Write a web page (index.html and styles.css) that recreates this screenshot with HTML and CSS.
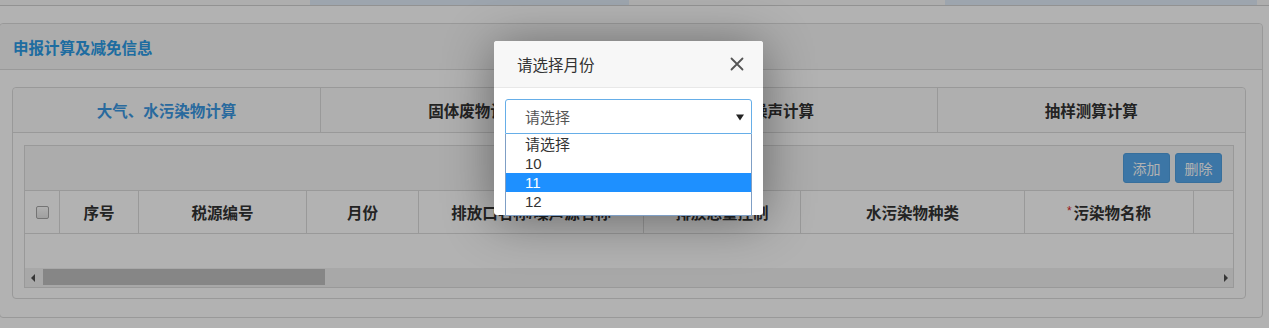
FILE: index.html
```html
<!DOCTYPE html>
<html lang="zh-CN">
<head>
<meta charset="utf-8">
<title>申报计算及减免信息</title>
<link rel="stylesheet" href="styles.css">
</head>
<body>
<div class="page">
  <div class="topstrip">
    <div class="ts ts-1"></div>
    <div class="ts ts-2"></div>
    <div class="ts ts-3"></div>
    <div class="ts ts-4"></div>
    <div class="ts ts-5"></div>
  </div>
  <div class="panel">
    <div class="panel-head"><span class="panel-title">申报计算及减免信息</span></div>
    <div class="panel-body">
      <div class="tabs">
        <div class="tab-nav">
          <div class="tab active">大气、水污染物计算</div>
          <div class="tab">固体废物计算</div>
          <div class="tab">噪声计算</div>
          <div class="tab">抽样测算计算</div>
        </div>
        <div class="tab-content">
          <div class="grid">
            <div class="toolbar">
              <button class="btn">添加</button>
              <button class="btn">删除</button>
            </div>
            <div class="table-wrap">
              <div class="thead">
                <div class="th c0"><span class="cb"></span></div>
                <div class="th c1">序号</div>
                <div class="th c2">税源编号</div>
                <div class="th c3">月份</div>
                <div class="th c4">排放口名称/噪声源名称</div>
                <div class="th c5">排放总量控制</div>
                <div class="th c6">水污染物种类</div>
                <div class="th c7"><span class="req">*</span>污染物名称</div>
                <div class="th c8"></div>
              </div>
              <div class="tbody"></div>
            </div>
            <div class="hscroll">
              <div class="sb-btn"><span class="tri-l"></span></div>
              <div class="sb-track"><div class="sb-thumb"></div></div>
              <div class="sb-btn"><span class="tri-r"></span></div>
            </div>
          </div>
        </div>
      </div>
    </div>
  </div>
</div>

<div class="backdrop"></div>

<div class="modal">
  <div class="modal-head">
    <span class="modal-title">请选择月份</span>
    <svg class="close" width="14" height="14" viewBox="0 0 14 14"><path d="M1.5 1.5 L12.5 12.5 M12.5 1.5 L1.5 12.5" stroke="#555" stroke-width="1.8" stroke-linecap="round" fill="none"/></svg>
  </div>
  <div class="modal-body">
    <div class="select">
      <span class="select-text">请选择</span>
      <svg class="caret" width="8" height="7" viewBox="0 0 8 7"><polygon points="0,0.5 8,0.5 4,6.5" fill="#222"/></svg>
    </div>
  </div>
</div>

<div class="dropdown">
  <div class="opt">请选择</div>
  <div class="opt">10</div>
  <div class="opt sel">11</div>
  <div class="opt">12</div>
</div>
</body>
</html>
```
FILE: styles.css
```css
* { box-sizing: border-box; }
html, body { margin: 0; padding: 0; }
body {
  width: 1269px;
  height: 328px;
  overflow: hidden;
  background: #fff;
  font-family: "Liberation Sans", "Noto Sans CJK SC", sans-serif;
  color: #333;
  position: relative;
}
.page { width: 1269px; }

/* top strip */
.topstrip { display: flex; height: 6px; border-bottom: 1px solid #d2d2d2; }
.ts { height: 5px; }
.ts-1 { width: 310px; background: #f9f9f9; }
.ts-2 { width: 319px; background: #e1edfa; }
.ts-3 { width: 316px; background: #f9f9f9; }
.ts-4 { width: 312px; background: #e1edfa; }
.ts-5 { flex: 1; background: #f9f9f9; }

/* panel */
.panel {
  margin: 17px 0 0 -1px;
  width: 1264px;
  border: 1px solid #dcdcdc;
  border-radius: 4px;
  background: #fff;
}
.panel-head {
  height: 46px;
  background: #f6f6f6;
  border-bottom: 1px solid #dcdcdc;
  border-radius: 4px 4px 0 0;
  padding-left: 13px;
  display: flex;
  align-items: center;
}
.panel-title { font-size: 15.5px; font-weight: bold; color: #2b9be6; }
.panel-body { padding: 17px 16px 18px 12px; }

/* tabs */
.tabs { border: 1px solid #dcdcdc; border-radius: 4px; }
.tab-nav {
  display: flex;
  height: 45px;
  border-bottom: 1px solid #dcdcdc;
  background: #fbfbfb;
  border-radius: 4px 4px 0 0;
}
.tab {
  flex: 1;
  display: flex;
  align-items: center;
  justify-content: center;
  font-size: 15.5px;
  font-weight: bold;
  color: #333;
}
.tab + .tab { border-left: 1px solid #dcdcdc; }
.tab.active { color: #3c98e2; }
.tab-content { padding: 12px 11px 10px 11px; }

/* grid */
.grid { border: 1px solid #dcdcdc; overflow: hidden; }
.toolbar {
  height: 45px;
  background: #f6f6f6;
  border-bottom: 1px solid #dcdcdc;
  display: flex;
  justify-content: flex-end;
  align-items: center;
  gap: 5px;
  padding-right: 11px;
}
.btn {
  width: 47px;
  height: 30px;
  border: 1px solid #4f9fe0;
  border-radius: 3px;
  background: #56a9ee;
  color: #fff;
  font-family: "Liberation Sans", "Noto Sans CJK SC", sans-serif;
  font-size: 14px;
  padding: 0;
}
.table-wrap { overflow: hidden; }
.thead {
  display: flex;
  height: 43px;
  border-bottom: 1px solid #dcdcdc;
  background: #fff;
}
.th {
  flex-shrink: 0;
  border-right: 1px solid #dcdcdc;
  display: flex;
  align-items: center;
  justify-content: center;
  font-size: 15.5px;
  font-weight: bold;
  color: #333;
  white-space: nowrap;
}
.c0 { width: 35px; }
.c1 { width: 79px; }
.c2 { width: 168px; }
.c3 { width: 112px; }
.c4 { width: 225px; }
.c5 { width: 157px; }
.c6 { width: 224px; }
.c7 { width: 169px; }
.c8 { width: 160px; }
.req { color: #d22; font-size: 12px; align-self: flex-start; margin-top: 13px; margin-right: 2px; font-weight: normal; }
.cb {
  width: 13px;
  height: 13px;
  border: 1px solid #a6a6a6;
  border-radius: 2px;
  background: linear-gradient(#fdfdfd, #e4e4e4);
}
.tbody { height: 34px; background: #fff; }

/* fake horizontal scrollbar */
.hscroll { display: flex; height: 19px; background: #f1f1f1; }
.sb-btn { width: 17px; display: flex; align-items: center; justify-content: center; }
.sb-track { flex: 1; padding-top: 1px; }
.sb-thumb { width: 282px; height: 16px; background: #c1c1c1; margin-left: 1px; }
.tri-l, .tri-r { width: 0; height: 0; border-top: 4px solid transparent; border-bottom: 4px solid transparent; }
.tri-l { border-right: 4px solid #505050; margin-left: -2px; }
.tri-r { border-left: 4px solid #505050; margin-right: -2px; }

/* overlay */
.backdrop { position: absolute; inset: 0; background: rgba(0, 0, 0, 0.3); }
.modal {
  position: absolute;
  left: 494px;
  top: 41px;
  width: 269px;
  height: 174px;
  background: #fff;
  border-radius: 3px;
  box-shadow: 0 5px 50px rgba(0, 0, 0, 0.42);
}
.modal-head {
  height: 47px;
  background: #f7f7f7;
  border-bottom: 1px solid #e8e8e8;
  border-radius: 3px 3px 0 0;
  display: flex;
  align-items: center;
  justify-content: space-between;
  padding: 0 19px 0 23px;
}
.modal-title { font-size: 15.5px; color: #333; }
.close { display: block; }
.modal-body { padding: 11px 11px; }
.select {
  height: 35px;
  border: 1px solid #66aee8;
  border-radius: 3px 3px 0 0;
  display: flex;
  align-items: center;
  justify-content: space-between;
  padding: 0 7px 0 19px;
  font-size: 15px;
  color: #555;
}
.caret { display: block; margin-top: 1px; }
.dropdown {
  position: absolute;
  left: 505px;
  top: 134px;
  width: 247px;
  border: 1px solid #7f9fc5;
  border-top: none;
  background: #fff;
  padding: 1px 0 4px;
}
.opt {
  height: 19px;
  line-height: 19px;
  padding-left: 19px;
  font-size: 15px;
  color: #333;
}
.opt.sel { background: #1e90ff; color: #fff; }
```
